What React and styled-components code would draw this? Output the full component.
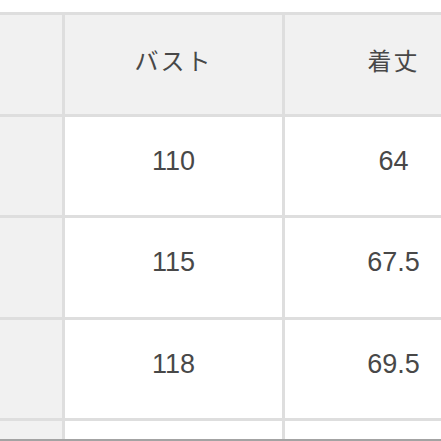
import React from 'react'
import styled, { createGlobalStyle } from 'styled-components'

const GlobalStyle = createGlobalStyle`
  html, body {
    margin: 0;
    padding: 0;
    background: #ffffff;
  }
  body {
    font-family: 'Liberation Sans', 'Noto Sans CJK JP', sans-serif;
  }
`

const Frame = styled.div`
  width: 441px;
  height: 441px;
  overflow: hidden;
  box-sizing: border-box;
  padding-top: 12px;
  border-bottom: 2px solid #a3a3a3;
  background: #ffffff;
`

const Table = styled.div`
  display: grid;
  grid-template-columns: 217px 217px 217px;
  grid-auto-rows: 98.5px;
  gap: 3px;
  padding: 3px;
  width: max-content;
  margin-left: -158px;
  background: #dedede;
`

const Cell = styled.div`
  display: flex;
  align-items: center;
  justify-content: center;
  padding-bottom: 9px;
  box-sizing: border-box;
  background: ${p => (p.$shade ? '#f1f1f1' : '#ffffff')};
  color: #484848;
  font-size: ${p => (p.$head ? '24px' : '27px')};
  font-family: ${p =>
    p.$head
      ? "'Noto Sans CJK JP', sans-serif"
      : "'Liberation Sans', 'Noto Sans CJK JP', sans-serif"};
  font-weight: 400;
  letter-spacing: ${p => (p.$head ? '2px' : '0')};
`

const rows = [
  ['110', '64'],
  ['115', '67.5'],
  ['118', '69.5'],
  ['', '']
]

export default function App() {
  return (
    <>
      <GlobalStyle />
      <Frame>
        <Table>
          <Cell $shade $head />
          <Cell $shade $head>バスト</Cell>
          <Cell $shade $head>着丈</Cell>
          {rows.map((r, i) => (
            <React.Fragment key={i}>
              <Cell $shade />
              <Cell>{r[0]}</Cell>
              <Cell>{r[1]}</Cell>
            </React.Fragment>
          ))}
        </Table>
      </Frame>
    </>
  )
}
